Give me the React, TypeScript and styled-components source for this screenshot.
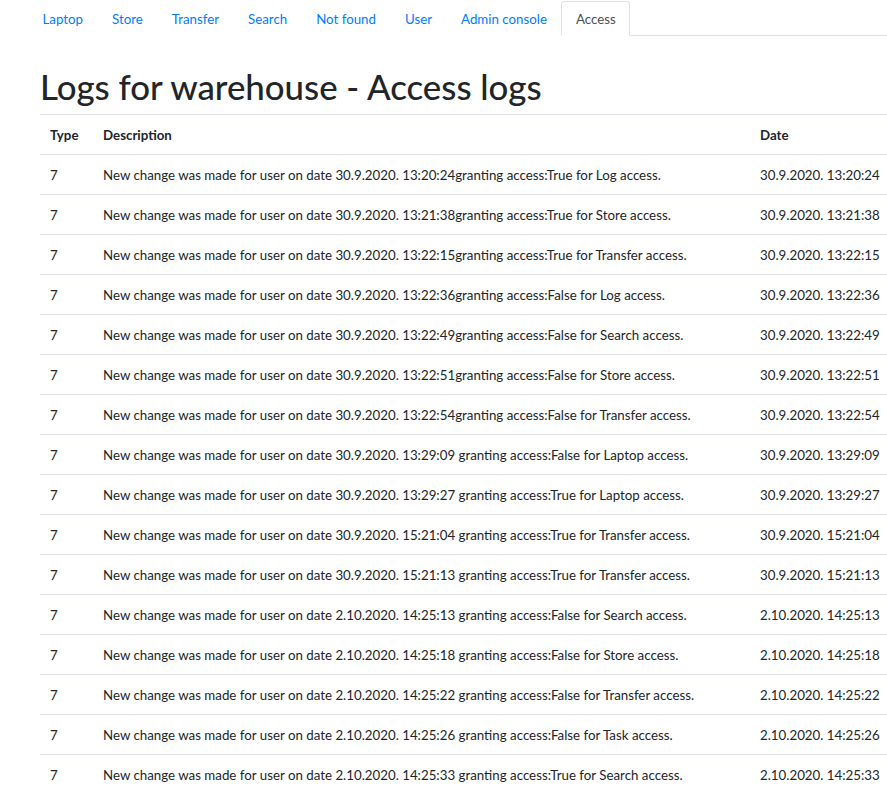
import React from "react";
import styled, { createGlobalStyle } from "styled-components";

const GlobalStyle = createGlobalStyle`
  body {
    margin: 0;
    background: #fff;
    color: #212529;
    font-family: "Segoe UI", Lato, sans-serif;
    font-size: 13.3px;
  }
`;

const Tabs = styled.ul`
  display: flex;
  list-style: none;
  margin: 0 0 0 28px;
  padding: 0;
  border-bottom: 1px solid #dee2e6;
`;

const Tab = styled.li<{ $active?: boolean }>`
  margin-bottom: -1px;
  padding: 7px 13.5px 6px;
  line-height: 20px;
  margin-top: 1px;
  border: 1px solid ${(p) => (p.$active ? "#dee2e6" : "transparent")};
  border-bottom-color: ${(p) => (p.$active ? "#fff" : "transparent")};
  border-radius: 3px 3px 0 0;
  color: ${(p) => (p.$active ? "#495057" : "#007bff")};
  background: #fff;
  cursor: pointer;
`;

const Content = styled.div`
  padding: 31px 0 0 40px;
`;

const Title = styled.h1`
  margin: 0 0 7px;
  font-size: 34.8px;
  font-weight: 500;
  line-height: 40px;
`;

const Table = styled.table`
  width: 100%;
  border-collapse: collapse;
  table-layout: fixed;
`;

const Th = styled.th<{ $w?: number }>`
  width: ${(p) => (p.$w ? `${p.$w}px` : "auto")};
  text-align: left;
  font-weight: 700;
  padding: 10px 10px 9px;
  line-height: 20px;
  border-top: 1px solid #dee2e6;
  border-bottom: 1px solid #dee2e6;
`;

const Td = styled.td`
  padding: 10px 10px 9px;
  line-height: 20px;
  border-bottom: 1px solid #dee2e6;
  white-space: nowrap;
`;

const tabs = ["Laptop", "Store", "Transfer", "Search", "Not found", "User", "Admin console", "Access"];

const logs: [string, string, string][] = [
  ["30.9.2020. 13:20:24", "granting access:True for Log access.", ""],
  ["30.9.2020. 13:21:38", "granting access:True for Store access.", ""],
  ["30.9.2020. 13:22:15", "granting access:True for Transfer access.", ""],
  ["30.9.2020. 13:22:36", "granting access:False for Log access.", ""],
  ["30.9.2020. 13:22:49", "granting access:False for Search access.", ""],
  ["30.9.2020. 13:22:51", "granting access:False for Store access.", ""],
  ["30.9.2020. 13:22:54", "granting access:False for Transfer access.", ""],
  ["30.9.2020. 13:29:09", "granting access:False for Laptop access.", " "],
  ["30.9.2020. 13:29:27", "granting access:True for Laptop access.", " "],
  ["30.9.2020. 15:21:04", "granting access:True for Transfer access.", " "],
  ["30.9.2020. 15:21:13", "granting access:True for Transfer access.", " "],
  ["2.10.2020. 14:25:13", "granting access:False for Search access.", " "],
  ["2.10.2020. 14:25:18", "granting access:False for Store access.", " "],
  ["2.10.2020. 14:25:22", "granting access:False for Transfer access.", " "],
  ["2.10.2020. 14:25:26", "granting access:False for Task access.", " "],
  ["2.10.2020. 14:25:33", "granting access:True for Search access.", " "],
];

export default function App() {
  return (
    <>
      <GlobalStyle />
      <Tabs>
        {tabs.map((t) => (
          <Tab key={t} $active={t === "Access"}>
            {t}
          </Tab>
        ))}
      </Tabs>
      <Content>
        <Title>Logs for warehouse - Access logs</Title>
        <Table>
          <thead>
            <tr>
              <Th $w={33}>Type</Th>
              <Th $w={637}>Description</Th>
              <Th>Date</Th>
            </tr>
          </thead>
          <tbody>
            {logs.map(([date, text, sep]) => (
              <tr key={date}>
                <Td>7</Td>
                <Td>
                  New change was made for user on date {date}
                  {sep}
                  {text}
                </Td>
                <Td>{date}</Td>
              </tr>
            ))}
          </tbody>
        </Table>
      </Content>
    </>
  );
}
